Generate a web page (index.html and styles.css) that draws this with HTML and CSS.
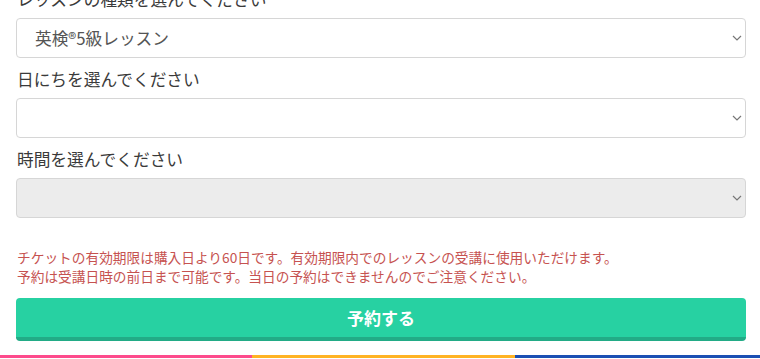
FILE: index.html
```html
<!DOCTYPE html>
<html lang="ja">

<head>
    <meta charset="UTF-8">
    <meta name="viewport" content="width=device-width, initial-scale=1.0">
    <title>予約</title>
    <link rel="stylesheet" href="styles.css">
</head>

<body>
    <form class="reserve">
        <div class="field">
            <label for="lesson">レッスンの種類を選んでください</label>
            <div class="selectWrap">
                <select id="lesson">
                    <option>英検®5級レッスン</option>
                </select>
                <svg class="chevron" width="10" height="6" viewBox="0 0 10 6"><path d="M1 1l4 4 4-4" fill="none" stroke="#777" stroke-width="1.2"/></svg>
            </div>
        </div>

        <div class="field">
            <label for="day">日にちを選んでください</label>
            <div class="selectWrap">
                <select id="day">
                    <option></option>
                </select>
                <svg class="chevron" width="10" height="6" viewBox="0 0 10 6"><path d="M1 1l4 4 4-4" fill="none" stroke="#777" stroke-width="1.2"/></svg>
            </div>
        </div>

        <div class="field">
            <label for="time">時間を選んでください</label>
            <div class="selectWrap">
                <select id="time" disabled>
                    <option></option>
                </select>
                <svg class="chevron" width="10" height="6" viewBox="0 0 10 6"><path d="M1 1l4 4 4-4" fill="none" stroke="#777" stroke-width="1.2"/></svg>
            </div>
        </div>

        <p class="notice">チケットの有効期限は購入日より60日です。有効期限内でのレッスンの受講に使用いただけます。<br>予約は受講日時の前日まで可能です。当日の予約はできませんのでご注意ください。</p>

        <button type="button" class="submit">予約する</button>
    </form>

    <div class="colorBar">
        <span class="pink"></span>
        <span class="orange"></span>
        <span class="blue"></span>
    </div>
</body>

</html>
```

FILE: styles.css
```css
body {
    margin: 0;
    height: 359px;
    overflow: hidden;
    background-color: #fff;
    font-family: "Noto Sans CJK JP", "Noto Sans", sans-serif;
    color: #3a3a3a;
}

.reserve {
    margin-top: -13px;
    padding: 0 14px 0 16px;
}

.field {
    margin-bottom: 9px;
}

.field label {
    display: block;
    height: 24px;
    line-height: 24px;
    font-size: 16.7px;
    padding-left: 1px;
    margin-bottom: 7px;
}

.selectWrap {
    position: relative;
}

select {
    display: block;
    width: 100%;
    height: 40px;
    padding: 0 30px 0 18px;
    border: 1px solid #d6d6d6;
    border-radius: 4px;
    background-color: #fff;
    font-family: inherit;
    font-size: 16.7px;
    color: #555;
    appearance: none;
    -webkit-appearance: none;
}

select:disabled {
    background-color: #ececec;
    opacity: 1;
}

.chevron {
    position: absolute;
    right: 4px;
    top: 17px;
}

.notice {
    margin: 30px 0 12px;
    padding-left: 1px;
    font-size: 13.7px;
    line-height: 19px;
    color: #c65250;
}

.submit {
    display: block;
    width: 100%;
    height: 43px;
    border: none;
    border-bottom: 4px solid #22ab86;
    border-radius: 4px;
    background-color: #27d1a2;
    color: #fff;
    font-family: inherit;
    font-size: 17px;
    font-weight: bold;
    cursor: pointer;
}

.colorBar {
    display: flex;
    height: 3px;
    margin-top: 14px;
}

.colorBar .pink {
    width: 252px;
    background-color: #fd4a8c;
}

.colorBar .orange {
    width: 263px;
    background-color: #ffb323;
}

.colorBar .blue {
    flex: 1;
    background-color: #1b4fb3;
}
```
